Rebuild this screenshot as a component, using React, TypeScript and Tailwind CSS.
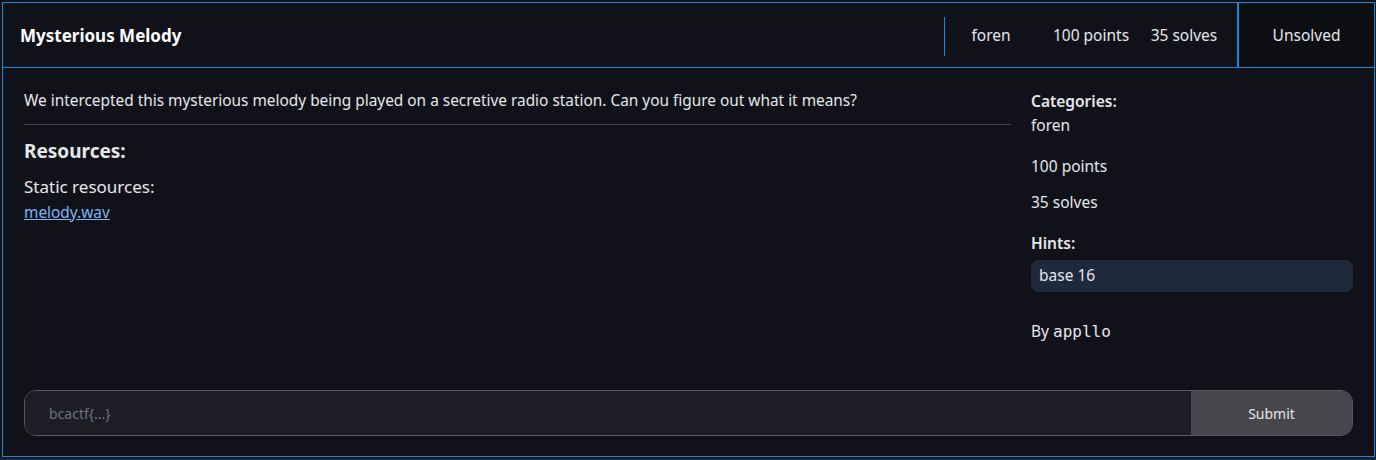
export default function App() {
  const font = { fontFamily: '"Noto Sans", "Open Sans", sans-serif' };
  return (
    <div className="h-[460px] w-[1376px] bg-[#1b2430] overflow-hidden" style={font}>
      <div className="h-[458px] bg-[#111219] pt-[2px] pl-[2px] pr-[1px]">
        <div className="h-[455px] border border-[#1a86dc] flex flex-col bg-[#111219] text-[#e5e7eb]">
          {/* header */}
          <div className="h-[65px] flex items-stretch border-b border-[#1a86dc]">
            <div className="flex-1 flex items-center pt-[2px] pl-[17px] text-[17px] font-bold text-white">
              Mysterious Melody
            </div>
            <div className="flex items-center pt-[2px] text-[15.5px]">
              <div className="w-px h-[39px] bg-[#1a86dc]" />
              <div className="w-[92px] text-center">foren</div>
              <div className="w-[108px] text-center">100 points</div>
              <div className="w-[78px] text-center mr-[14px]">35 solves</div>
            </div>
            <div className="w-[2px] bg-[#1a86dc]" />
            <div className="w-[135px] bg-[#0e0f13] flex items-center justify-center pt-[2px] text-[15.5px]">
              Unsolved
            </div>
          </div>
          {/* body */}
          <div className="flex-1 flex flex-col px-[21px]">
            <div className="flex flex-1 gap-[20px] pt-[22px]">
              <div className="flex-1">
                <p className="text-[15.4px] leading-[22px] pb-[12px] border-b border-[#3f3f46]">
                  We intercepted this mysterious melody being played on a secretive radio station. Can you figure out what it means?
                </p>
                <h2 className="mt-[13px] text-[19px] font-bold leading-[26px]">Resources:</h2>
                <div className="mt-[11px] text-[17px] leading-[24px]">Static resources:</div>
                <a href="#" className="block mt-[3px] text-[15.4px] leading-[22px] text-[#7cb4f5] underline w-fit">melody.wav</a>
              </div>
              <div className="w-[322px] flex flex-col">
                <div className="text-[15.5px] font-semibold leading-[22px]">Categories:</div>
                <div className="mt-[1px] text-[15.5px] leading-[24px]">foren</div>
                <div className="mt-[19px] text-[15.5px] leading-[20px]">100 points</div>
                <div className="mt-[16px] text-[15.5px] leading-[20px]">35 solves</div>
                <div className="mt-[21px] text-[15.5px] font-semibold leading-[20px]">Hints:</div>
                <div className="mt-[7px] h-[32px] rounded-lg bg-[#1e293b] flex items-center px-[8px] text-[15.5px]">base 16</div>
                <div className="mt-[29px] text-[15.5px] leading-[20px]">
                  By <span style={{ fontFamily: '"DejaVu Sans Mono", monospace', fontSize: '16px' }}>appllo</span>
                </div>
              </div>
            </div>
            <div className="mb-[20px] h-[46px] flex rounded-xl border border-[#57575f] overflow-hidden">
              <input
                className="flex-1 bg-[#1d1e25] pl-[24px] text-[14px] text-[#e5e7eb] placeholder-[#6b7280] outline-none"
                placeholder="bcactf{...}"
              />
              <button className="w-[161px] bg-[#47464c] text-[14px] text-[#e5e7eb]">Submit</button>
            </div>
          </div>
        </div>
      </div>
    </div>
  );
}
